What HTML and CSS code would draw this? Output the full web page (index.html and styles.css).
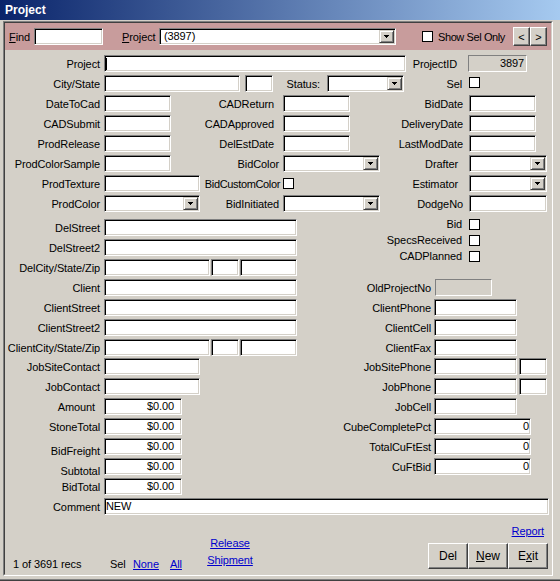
FILE: index.html
```html
<!DOCTYPE html>
<html>
<head>
<meta charset="utf-8">
<title>Project</title>
<link rel="stylesheet" href="styles.css">
</head>
<body>
<div class="window">
  <div class="titlebar">Project</div>
  <div class="client">
    <div class="inner">
      <div class="header">
        <span class="hl find"><u>F</u>ind</span>
        <span class="tb w69"></span>
        <span class="hl proj"><u>P</u>roject</span>
        <span class="tb cb w237"><span class="val">(3897)</span><span class="dd"><svg width="5" height="3" viewBox="0 0 5 3"><path d="M0 0h5v1H0zM1 1h3v1H1zM2 2h1v1H2z"/></svg></span></span>
        <span class="ck hck"></span>
        <span class="showsel">Show Sel Only</span>
        <span class="navs"><span class="btn nav">&lt;</span><span class="btn nav">&gt;</span></span>
      </div>

      <div class="form">
        <div class="row">
          <span class="l1">Project</span>
          <span class="tb w302"><span class="caret"></span></span>
          <span class="lbl w62 pr11">ProjectID</span>
          <span class="gf w59 num pr2">3897</span>
        </div>
        <div class="row">
          <span class="l1">City/State</span>
          <span class="tb w136"></span>
          <span class="tb w28 ml5"></span>
          <span class="lbl w54 pr7">Status:</span>
          <span class="tb cb w77"><span class="val"></span><span class="dd"><svg width="5" height="3" viewBox="0 0 5 3"><path d="M0 0h5v1H0zM1 1h3v1H1zM2 2h1v1H2z"/></svg></span></span>
          <span class="lbl w65 pr7">Sel</span>
          <span class="ck up1"></span>
        </div>

        <div class="grid-a">
          <span class="ga pr4">DateToCad</span><span class="tb w67"></span>
          <span class="ga pr9">CADReturn</span><span class="tb w67"></span>
          <span class="ga pr6">BidDate</span><span class="tb w67"></span>

          <span class="ga pr4">CADSubmit</span><span class="tb w67"></span>
          <span class="ga pr9">CADApproved</span><span class="tb w67"></span>
          <span class="ga pr6">DeliveryDate</span><span class="tb w67"></span>

          <span class="ga pr4">ProdRelease</span><span class="tb w67"></span>
          <span class="ga pr9">DelEstDate</span><span class="tb w67"></span>
          <span class="ga pr6">LastModDate</span><span class="tb w67"></span>

          <span class="ga pr4">ProdColorSample</span><span class="tb w67"></span>
          <span class="ga pr4">BidColor</span><span class="tb cb w97"><span class="val"></span><span class="dd"><svg width="5" height="3" viewBox="0 0 5 3"><path d="M0 0h5v1H0zM1 1h3v1H1zM2 2h1v1H2z"/></svg></span></span>
          <span class="ga pr11">Drafter</span><span class="tb cb w78"><span class="val"></span><span class="dd"><svg width="5" height="3" viewBox="0 0 5 3"><path d="M0 0h5v1H0zM1 1h3v1H1zM2 2h1v1H2z"/></svg></span></span>

          <span class="ga pr4">ProdTexture</span><span class="tb w96"></span>
          <span class="ga pr3 tight">BidCustomColor</span><span class="ck"></span>
          <span class="ga pr11">Estimator</span><span class="tb cb w78"><span class="val"></span><span class="dd"><svg width="5" height="3" viewBox="0 0 5 3"><path d="M0 0h5v1H0zM1 1h3v1H1zM2 2h1v1H2z"/></svg></span></span>

          <span class="ga pr4">ProdColor</span><span class="tb cb w96"><span class="val"></span><span class="dd"><svg width="5" height="3" viewBox="0 0 5 3"><path d="M0 0h5v1H0zM1 1h3v1H1zM2 2h1v1H2z"/></svg></span></span>
          <span class="ga pr4">BidInitiated</span><span class="tb cb w97"><span class="val"></span><span class="dd"><svg width="5" height="3" viewBox="0 0 5 3"><path d="M0 0h5v1H0zM1 1h3v1H1zM2 2h1v1H2z"/></svg></span></span>
          <span class="ga pr6">DodgeNo</span><span class="tb w78"></span>
        </div>

        <div class="secb">
          <div class="colL">
            <div class="row"><span class="l1">DelStreet</span><span class="tb w193"></span></div>
            <div class="row"><span class="l1">DelStreet2</span><span class="tb w193"></span></div>
            <div class="row"><span class="l1">DelCity/State/Zip</span><span class="tb w106"></span><span class="tb w28 ml1"></span><span class="tb w57 ml1"></span></div>
          </div>
          <div class="checks">
            <div class="crow"><span class="clbl">Bid</span><span class="ck"></span></div>
            <div class="crow"><span class="clbl">SpecsReceived</span><span class="ck"></span></div>
            <div class="crow"><span class="clbl">CADPlanned</span><span class="ck"></span></div>
          </div>
        </div>

        <div class="row">
          <div class="lp"><span class="l1">Client</span><span class="tb w193"></span></div>
          <span class="rl">OldProjectNo</span><span class="gf w57 ml1"></span>
        </div>
        <div class="row">
          <div class="lp"><span class="l1">ClientStreet</span><span class="tb w193"></span></div>
          <span class="rl">ClientPhone</span><span class="tb w83"></span>
        </div>
        <div class="row">
          <div class="lp"><span class="l1">ClientStreet2</span><span class="tb w193"></span></div>
          <span class="rl">ClientCell</span><span class="tb w83"></span>
        </div>
        <div class="row mb2">
          <div class="lp"><span class="l1">ClientCity/State/Zip</span><span class="tb w106"></span><span class="tb w28 ml1"></span><span class="tb w57 ml1"></span></div>
          <span class="rl">ClientFax</span><span class="tb w83"></span>
        </div>
        <div class="row">
          <div class="lp"><span class="l1">JobSiteContact</span><span class="tb w96"></span></div>
          <span class="rl">JobSitePhone</span><span class="tb w83"></span><span class="tb w28 ml2"></span>
        </div>
        <div class="row">
          <div class="lp"><span class="l1">JobContact</span><span class="tb w96"></span></div>
          <span class="rl">JobPhone</span><span class="tb w83"></span><span class="tb w28 ml2"></span>
        </div>
        <div class="row">
          <div class="lp"><span class="l1 pr9">Amount</span><span class="tb w78 num cur">$0.00</span></div>
          <span class="rl">JobCell</span><span class="tb w83"></span>
        </div>
        <div class="row">
          <div class="lp"><span class="l1">StoneTotal</span><span class="tb w78 num cur">$0.00</span></div>
          <span class="rl">CubeCompletePct</span><span class="tb w97 num pr1">0</span>
        </div>
        <div class="row">
          <div class="lp"><span class="l1 low">BidFreight</span><span class="tb w78 num cur">$0.00</span></div>
          <span class="rl">TotalCuFtEst</span><span class="tb w97 num pr1">0</span>
        </div>
        <div class="row">
          <div class="lp"><span class="l1 low">Subtotal</span><span class="tb w78 num cur">$0.00</span></div>
          <span class="rl">CuFtBid</span><span class="tb w97 num pr1">0</span>
        </div>
        <div class="row">
          <div class="lp"><span class="l1">BidTotal</span><span class="tb w78 num cur">$0.00</span></div>
        </div>
        <div class="row">
          <span class="l1">Comment</span><span class="tb w445 pl1">NEW</span>
        </div>

        <div class="footer">
          <div class="fl">
            <span class="recs">1 of 3691 recs</span><span class="sel">Sel</span><span class="lnk none">None</span><span class="lnk">All</span>
          </div>
          <div class="fm"><span class="lnk">Release</span><span class="lnk">Shipment</span></div>
          <div class="fr">
            <span class="lnk rep">Report</span>
            <div class="btns"><span class="btn fbtn">Del</span><span class="btn fbtn"><u>N</u>ew</span><span class="btn fbtn">E<u>x</u>it</span></div>
          </div>
        </div>
      </div>
    </div>
  </div>
  <div class="fb"></div>
</div>
</body>
</html>
```

FILE: styles.css
```css
* { box-sizing: border-box; }

body {
  margin: 0;
  background: #d4d0c8;
  font-family: "Liberation Sans", Arial, sans-serif;
  font-size: 11px;
  letter-spacing: -0.1px;
  color: #000;
}

.window {
  width: 560px;
  height: 581px;
  background: #d4d0c8;
  border-bottom: 1px solid #404040;
  overflow: hidden;
}

.titlebar {
  height: 20px;
  line-height: 20px;
  padding-left: 5px;
  color: #fff;
  font-weight: bold;
  font-size: 12px;
  letter-spacing: 0;
  background: linear-gradient(to right, #0a246a, #a6caf0);
}

.client {
  margin: 1px 7px 0 3px;
  height: 555px;
  border: 1px solid;
  border-color: #808080 #fff #fff #808080;
}

.inner {
  height: 100%;
  border: 1px solid;
  border-color: #404040 #d4d0c8 #d4d0c8 #404040;
  display: flex;
  flex-direction: column;
}

.fb {
  height: 4px;
  border-bottom: 1px solid #808080;
}

/* header band */
.header {
  height: 27px;
  flex-shrink: 0;
  background: #c89c9c;
  display: flex;
  align-items: center;
  padding-left: 4px;
}
.hl { white-space: nowrap; flex-shrink: 0; }
.find { width: 25px; }
.proj { width: 37px; margin-left: 19px; }
.hck { margin-left: 26px; }
.showsel { margin-left: 5px; white-space: nowrap; letter-spacing: -0.4px; }
.navs { margin-left: auto; margin-right: 4px; display: flex; }

/* controls */
.tb {
  display: flex;
  align-items: center;
  height: 17px;
  flex-shrink: 0;
  background: #fff;
  border: 1px solid;
  border-color: #808080 #fff #fff #808080;
  box-shadow: inset 1px 1px #000, inset -1px -1px #d4d0c8;
  padding: 1px;
  line-height: 13px;
  white-space: nowrap;
  overflow: hidden;
}
.gf {
  display: flex;
  align-items: center;
  height: 17px;
  flex-shrink: 0;
  background: #d4d0c8;
  border: 1px solid;
  border-color: #808080 #fff #fff #808080;
  padding: 1px;
  line-height: 13px;
}
.num { justify-content: flex-end; }
.cur { padding-right: 7px; }
.cb { justify-content: space-between; }
.cb .val { padding-left: 3px; }
.dd {
  width: 15px;
  height: 13px;
  flex-shrink: 0;
  background: #d4d0c8;
  border: 1px solid;
  border-color: #d4d0c8 #404040 #404040 #d4d0c8;
  box-shadow: inset 1px 1px #fff, inset -1px -1px #808080;
  display: flex;
  align-items: center;
  justify-content: center;
}
.dd svg { display: block; fill: #000; }

.caret {
  display: block;
  width: 1px;
  height: 12px;
  background: #000;
}

.ck {
  width: 11px;
  height: 11px;
  flex-shrink: 0;
  background: #fff;
  border: 1px solid #000;
}
.up1 { margin-top: -3px; }

.btn {
  display: flex;
  align-items: center;
  justify-content: center;
  background: #d4d0c8;
  border: 1px solid;
  border-color: #fff #404040 #404040 #fff;
  box-shadow: inset -1px -1px #808080;
  letter-spacing: 0;
}
.nav { width: 17px; height: 19px; font-size: 11px; }
.fbtn { width: 40px; height: 26px; font-size: 12px; }

/* form */
.form {
  flex: 1;
  display: flex;
  flex-direction: column;
  padding-top: 5px;
}

.row {
  display: flex;
  align-items: center;
  height: 17px;
  margin-bottom: 3px;
  flex-shrink: 0;
}
.mb2 { margin-bottom: 2px; }

.l1 {
  width: 99px;
  padding-right: 4px;
  text-align: right;
  white-space: nowrap;
  flex-shrink: 0;
}
.low {
  align-self: flex-end;
  line-height: 13px;
  margin-bottom: -3px;
}
.lbl {
  text-align: right;
  white-space: nowrap;
  flex-shrink: 0;
}

.grid-a {
  display: grid;
  grid-template-columns: 99px 96px 83px 97px 89px 1fr;
  grid-auto-rows: 17px;
  row-gap: 3px;
  align-items: center;
  justify-items: start;
  margin-bottom: 7px;
}
.ga {
  justify-self: stretch;
  text-align: right;
  white-space: nowrap;
}
.tight { letter-spacing: -0.35px; }

.secb { display: flex; }
.colL { width: 295px; }
.checks { display: flex; flex-direction: column; }
.crow {
  display: flex;
  align-items: center;
  height: 11px;
  margin-bottom: 5px;
}
.clbl {
  width: 162px;
  margin-right: 7px;
  text-align: right;
  white-space: nowrap;
  line-height: 11px;
}

.lp {
  width: 295px;
  height: 17px;
  display: flex;
  align-items: center;
  flex-shrink: 0;
}
.rl {
  width: 131px;
  margin-right: 3px;
  text-align: right;
  white-space: nowrap;
  flex-shrink: 0;
}

/* widths */
.w28 { width: 28px; }
.w54 { width: 54px; }
.w57 { width: 57px; }
.w59 { width: 59px; }
.w62 { width: 62px; }
.w65 { width: 65px; }
.w67 { width: 67px; }
.w69 { width: 69px; }
.w77 { width: 77px; }
.w78 { width: 78px; }
.w83 { width: 83px; }
.w96 { width: 96px; }
.w97 { width: 97px; }
.w106 { width: 106px; }
.w136 { width: 136px; }
.w193 { width: 193px; }
.w237 { width: 237px; }
.w302 { width: 302px; }
.w445 { width: 445px; }

.ml1 { margin-left: 1px; }
.ml2 { margin-left: 2px; }
.ml5 { margin-left: 5px; }
.pr1 { padding-right: 1px; }
.pr2 { padding-right: 2px; }
.pr3 { padding-right: 3px; }
.pr4 { padding-right: 4px; }
.pr6 { padding-right: 6px; }
.pr7 { padding-right: 7px; }
.pr9 { padding-right: 9px; }
.pr11 { padding-right: 11px; }
.pl1 { padding-left: 1px; }

/* footer */
.footer {
  margin-top: auto;
  display: flex;
  align-items: flex-end;
  padding-bottom: 5px;
}
.fl {
  width: 195px;
  padding-left: 8px;
  display: flex;
  line-height: 13px;
  margin-bottom: -2px;
}
.recs { width: 97px; white-space: nowrap; }
.sel { width: 23px; }
.none { width: 37px; }
.lnk {
  color: #0000cc;
  text-decoration: underline;
  white-space: nowrap;
}
.fm {
  width: 60px;
  display: flex;
  flex-direction: column;
  align-items: center;
  line-height: 17px;
}
.fr {
  margin-left: auto;
  margin-right: 3px;
  display: flex;
  flex-direction: column;
  align-items: flex-end;
}
.rep {
  margin-right: 4px;
  margin-bottom: 5px;
  line-height: 13px;
}
.btns { display: flex; }
```
